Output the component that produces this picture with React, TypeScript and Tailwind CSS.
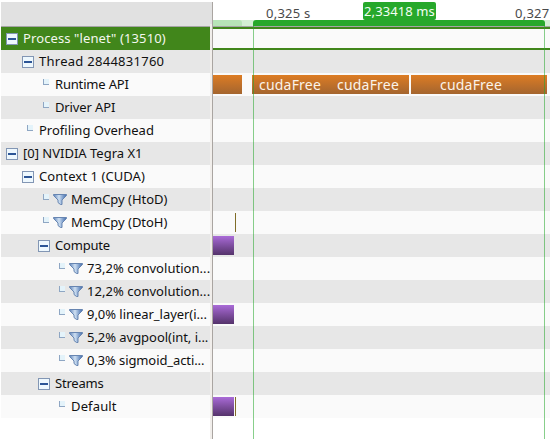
import React from "react";

type Row = {
  label: string;
  level: number;
  kind: "open" | "leaf" | "filter";
  tracking: string;
};

const rows: Row[] = [
  { label: 'Process "lenet" (13510)', level: 0, kind: "open", tracking: "tracking-[0.11px]" },
  { label: "Thread 2844831760", level: 1, kind: "open", tracking: "tracking-[0.27px]" },
  { label: "Runtime API", level: 2, kind: "leaf", tracking: "tracking-[-0.18px]" },
  { label: "Driver API", level: 2, kind: "leaf", tracking: "tracking-[-0.12px]" },
  { label: "Profiling Overhead", level: 1, kind: "leaf", tracking: "tracking-[0px]" },
  { label: "[0] NVIDIA Tegra X1", level: 0, kind: "open", tracking: "tracking-[0px]" },
  { label: "Context 1 (CUDA)", level: 1, kind: "open", tracking: "tracking-[0.08px]" },
  { label: "MemCpy (HtoD)", level: 2, kind: "filter", tracking: "tracking-[-0.03px]" },
  { label: "MemCpy (DtoH)", level: 2, kind: "filter", tracking: "tracking-[-0.03px]" },
  { label: "Compute", level: 2, kind: "open", tracking: "tracking-[-0.2px]" },
  { label: "73,2% convolution...", level: 3, kind: "filter", tracking: "tracking-[0.04px]" },
  { label: "12,2% convolution...", level: 3, kind: "filter", tracking: "tracking-[0.04px]" },
  { label: "9,0% linear_layer(i...", level: 3, kind: "filter", tracking: "tracking-[-0.04px]" },
  { label: "5,2% avgpool(int, i...", level: 3, kind: "filter", tracking: "tracking-[-0.04px]" },
  { label: "0,3% sigmoid_acti...", level: 3, kind: "filter", tracking: "tracking-[-0.1px]" },
  { label: "Streams", level: 2, kind: "open", tracking: "tracking-[-0.2px]" },
  { label: "Default", level: 3, kind: "leaf", tracking: "tracking-[0.15px]" },
];

const indents = ["pl-[5px]", "pl-[21px]", "pl-[37px]", "pl-[53px]"];

function Collapse() {
  return (
    <span className="mr-[5px] flex size-3 shrink-0 items-center justify-center border border-[#8296b4] bg-[#eef8fe]">
      <span className="h-[2px] w-2 bg-[#2c5596]" />
    </span>
  );
}

function Branch() {
  return (
    <span className="mr-[6px] ml-[5px] flex h-[11px] w-[6px] shrink-0 items-start">
      <span className="h-[6px] w-[6px] border-b border-l border-[#8ea6c3] bg-[#e4f3fa]" />
    </span>
  );
}

function Funnel() {
  return (
    <svg className="-ml-[2px] mr-1 shrink-0" width="14" height="11" viewBox="0 0 14 11">
      <defs>
        <linearGradient id="funnel" x1="0" x2="1" y1="0" y2="0">
          <stop offset="0" stopColor="#5c82b9" />
          <stop offset="0.42" stopColor="#cfe0f2" />
          <stop offset="0.75" stopColor="#7799c9" />
          <stop offset="1" stopColor="#4a70aa" />
        </linearGradient>
      </defs>
      <path d="M.5.5H13.5V1.5L9 6V10.5H7.5L5 8.5V6L.5 1.5Z" fill="url(#funnel)" stroke="#6785b1" />
    </svg>
  );
}

function TreeRow({ row, index }: { row: Row; index: number }) {
  const tone =
    index === 0 ? "bg-[#41861b] text-[#f4f7ef]" : index % 2 ? "bg-[#e7e7e7] text-[#101010]" : "bg-[#fafafa] text-[#101010]";
  return (
    <div className={`flex h-[23px] items-center overflow-hidden whitespace-nowrap ${indents[row.level]} ${tone}`}>
      {row.kind === "open" ? <Collapse /> : <Branch />}
      {row.kind === "filter" && <Funnel />}
      <span className={`text-[13px] leading-[23px] ${row.tracking}`}>{row.label}</span>
    </div>
  );
}

const orange = "bg-linear-to-b from-[#dd7c22] to-[#a4652e]";

function Kernel() {
  return <div className="h-[19px] w-[21px] bg-linear-to-b from-[#aa6bd8] to-[#55336b]" />;
}

function Track({ index }: { index: number }) {
  if (index === 0) return <div className="h-[23px] border-y-2 border-[#41861b] bg-[#fafafa]" />;
  return (
    <div className={`flex h-[23px] items-start pt-[2px] ${index % 2 ? "bg-[#e7e7e7]" : "bg-[#fafafa]"}`}>
      {index === 2 && (
        <div className="flex h-[19px] text-[14px] leading-[19px] text-[#fbf3e9]">
          <div className={`w-[29px] ${orange}`} />
          <div className={`ml-[10px] flex w-[157px] pl-[7px] ${orange}`}>
            <span className="w-[78px] tracking-[0.2px]">cudaFree</span>
            <span className="tracking-[0.2px]">cudaFree</span>
          </div>
          <div className={`ml-[2px] w-[136px] pl-[29px] ${orange}`}>
            <span className="tracking-[0.2px]">cudaFree</span>
          </div>
        </div>
      )}
      {(index === 9 || index === 12 || index === 16) && <Kernel />}
      {index === 8 && <div className="ml-[22px] h-[19px] w-px bg-[#806d28]" />}
      {index === 16 && <div className="ml-px h-[19px] w-px bg-[#806d28]" />}
    </div>
  );
}

function Ruler() {
  return (
    <div className="relative flex h-[27px] flex-col justify-end border-b border-[#a5a5a5] bg-white text-[13px] leading-[18px] text-[#4a4a4a]">
      <span className="absolute top-[4px] left-[53px] tracking-[0.25px]">0,325 s</span>
      <span className="absolute top-[4px] left-[302px] tracking-[0.25px]">0,327</span>
      <div className="flex h-[6px] bg-[#d4efd4]">
        <div className="w-[29px] rounded-tr-[3px] bg-[#b7e4b7]" />
        <div className="ml-[11px] w-[292px] rounded-t-[3px] bg-[#27a82b]" />
      </div>
      <div className="absolute top-[2px] left-[150px] flex h-[18px] w-[73px] items-center justify-center rounded-[2px] bg-[#27a82b] tracking-[0.1px] whitespace-nowrap text-[#f3fff3]">
        2,33418 ms
      </div>
    </div>
  );
}

export default function App() {
  return (
    <div className="flex h-[439px] w-[550px] overflow-hidden bg-white font-['Noto_Sans',sans-serif]">
      <div className="ml-px flex w-[209px] shrink-0 flex-col">
        <div className="mt-[2px] h-[25px] border-b border-[#a5a5a5] bg-[#e1e1e1]" />
        {rows.map((row, i) => (
          <TreeRow key={row.label} row={row} index={i} />
        ))}
      </div>
      <div className="mt-[2px] w-[3px] shrink-0 border-r border-[#aaa5a1] bg-[#f1eeeb]">
        <div className="h-[22px] bg-[#e1e1e1]" />
      </div>
      <div className="relative w-[337px] shrink-0 overflow-hidden">
        <Ruler />
        {rows.map((row, i) => (
          <Track key={row.label} index={i} />
        ))}
        <div className="absolute top-[26px] bottom-0 left-[40px] w-px bg-[#27a82b]/55" />
        <div className="absolute top-[23px] bottom-0 left-[331px] w-px bg-[#27a82b]/55" />
      </div>
    </div>
  );
}
